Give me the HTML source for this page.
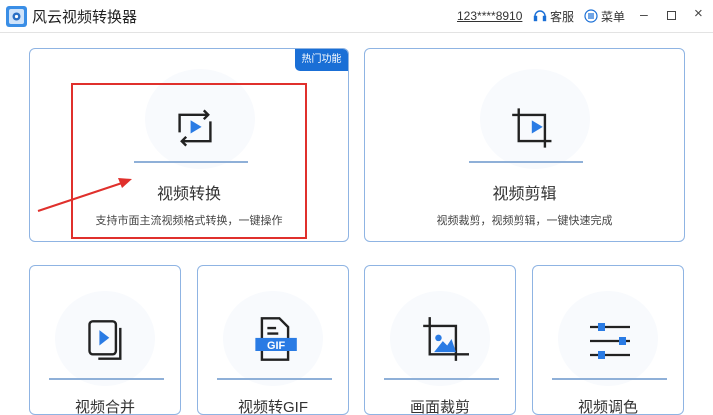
<!DOCTYPE html>
<html><head><meta charset="utf-8"><style>
*{margin:0;padding:0;box-sizing:border-box}
body{width:713px;height:400px;overflow:hidden;background:#fff;font-family:"Liberation Sans","Noto Sans CJK SC",sans-serif;position:relative;color:#333}
.a{position:absolute}
.card{position:absolute;border:1.5px solid #8fb4e3;border-radius:6px;background:#fff;overflow:hidden}
.blob{position:absolute;border-radius:50%;background:#f8fafd}
.ln{position:absolute;height:1.5px;background:#8fb0d8}
.t{position:absolute;width:100%;text-align:center}
</style></head><body>
<div class="a" style="left:0;top:32px;width:713px;height:1px;background:#e3e3e3"></div>
<svg class="a" style="left:6px;top:6px" width="21" height="21" viewBox="0 0 21 21"><rect width="21" height="21" rx="3" fill="#3a8ee6"/><rect x="3" y="3" width="15" height="15" rx="2" fill="#cfe3fa"/><circle cx="10.5" cy="10.5" r="4" fill="#2a6fc4"/><circle cx="10.5" cy="10.5" r="1.6" fill="#fff"/></svg>
<div class="a" style="left:32px;top:6px;font-size:15px;color:#222">风云视频转换器</div>
<div class="a" style="left:457px;top:9px;font-size:12px;color:#333;text-decoration:underline">123****8910</div>
<svg class="a" style="left:533px;top:9px" width="14" height="14" viewBox="0 0 14 14" fill="none" stroke="#1a6fd6" stroke-width="1.4"><path d="M2 9V7a5 5 0 0 1 10 0v2"/><rect x="1.5" y="7.5" width="2" height="4" fill="#1a6fd6"/><rect x="10.5" y="7.5" width="2" height="4" fill="#1a6fd6"/></svg>
<div class="a" style="left:550px;top:8px;font-size:12px">客服</div>
<svg class="a" style="left:584px;top:9px" width="14" height="14" viewBox="0 0 14 14" fill="none" stroke="#1a6fd6" stroke-width="1.2"><circle cx="7" cy="7" r="6"/><path d="M4 5h6M4 7h6M4 9h6"/></svg>
<div class="a" style="left:601px;top:8px;font-size:12px">菜单</div>
<div class="a" style="left:640px;top:6px;font-size:14px;color:#444">–</div>
<div class="a" style="left:667px;top:11px;width:9px;height:9px;border:1.3px solid #444"></div>
<div class="a" style="left:694px;top:5px;font-size:15px;color:#444">×</div>

<div class="card" style="left:29px;top:48px;width:320px;height:194px">
<div class="blob" style="left:115px;top:20px;width:110px;height:100px"></div>
<div class="a" style="right:0;top:0;width:53px;height:22px;background:#1a6fd6;border-bottom-left-radius:5px;color:#fff;font-size:10px;line-height:22px;text-align:center">热门功能</div>
<svg class="a" style="left:145px;top:57px" width="40" height="44" viewBox="0 0 36 40" fill="none" stroke="#222" stroke-width="2.2"><path d="M4 24V8h26"/><path d="M26 4l4 4-4 4" fill="none"/><path d="M32 14v18H6"/><path d="M10 28l-4 4 4 4"/><path d="M14 13l10 6-10 6z" fill="#2a7be4" stroke="none"/></svg>
<div class="ln" style="left:104px;top:112px;width:114px"></div>
<div class="t" style="top:131px;font-size:16px">视频转换</div>
<div class="t" style="top:163px;font-size:11px;color:#444">支持市面主流视频格式转换，一键操作</div>
</div>
<div class="card" style="left:364px;top:48px;width:321px;height:194px">
<div class="blob" style="left:115px;top:20px;width:110px;height:100px"></div>
<svg class="a" style="left:145px;top:55px" width="48" height="48" viewBox="0 0 44 44" fill="none" stroke="#222" stroke-width="2.2"><path d="M8 4v30h30"/><path d="M2 10h30v30"/><path d="M20 15l10 6-10 6z" fill="#2a7be4" stroke="none"/></svg>
<div class="ln" style="left:104px;top:112px;width:114px"></div>
<div class="t" style="top:131px;font-size:16px">视频剪辑</div>
<div class="t" style="top:163px;font-size:11px;color:#444">视频裁剪，视频剪辑，一键快速完成</div>
</div>

<div class="card" style="left:29px;top:265px;width:152px;height:150px">
<div class="blob" style="left:25px;top:25px;width:100px;height:95px"></div>
<svg class="a" style="left:56px;top:52px" width="40" height="44" viewBox="0 0 36 40" fill="none" stroke="#222" stroke-width="2.2"><rect x="3" y="3" width="24" height="30" rx="3"/><path d="M31 9v28H11"/><path d="M12 11l9 7-9 7z" fill="#2a7be4" stroke="none"/></svg>
<div class="ln" style="left:19px;top:112px;width:115px"></div>
<div class="t" style="top:130px;font-size:15px">视频合并</div>
</div>
<div class="card" style="left:197px;top:265px;width:152px;height:150px">
<div class="blob" style="left:25px;top:25px;width:100px;height:95px"></div>
<svg class="a" style="left:55px;top:49px" width="44" height="48" viewBox="0 0 40 44" fill="none" stroke="#222" stroke-width="2.2"><path d="M8 3h16l8 8v30H8z"/><path d="M13 12h8M13 17h10"/><rect x="2" y="21" width="38" height="12" fill="#2a7be4" stroke="none"/><text x="21" y="31" font-size="10" font-weight="bold" fill="#fff" stroke="none" text-anchor="middle" font-family="Liberation Sans">GIF</text></svg>
<div class="ln" style="left:19px;top:112px;width:115px"></div>
<div class="t" style="top:130px;font-size:15px">视频转GIF</div>
</div>
<div class="card" style="left:364px;top:265px;width:152px;height:150px">
<div class="blob" style="left:25px;top:25px;width:100px;height:95px"></div>
<svg class="a" style="left:56px;top:49px" width="48" height="48" viewBox="0 0 44 44" fill="none" stroke="#222" stroke-width="2.2"><path d="M8 2v34h36"/><path d="M2 10h30v32"/><circle cx="16" cy="21" r="3" fill="#2a7be4" stroke="none"/><path d="M12 34l8-10 4 4 4-6 4 12z" fill="#2a7be4" stroke="none"/></svg>
<div class="ln" style="left:19px;top:112px;width:115px"></div>
<div class="t" style="top:130px;font-size:15px">画面裁剪</div>
</div>
<div class="card" style="left:532px;top:265px;width:152px;height:150px">
<div class="blob" style="left:25px;top:25px;width:100px;height:95px"></div>
<svg class="a" style="left:55px;top:55px" width="44" height="40" viewBox="0 0 44 40" fill="none" stroke="#222" stroke-width="2.2"><path d="M2 6h40M2 20h40M2 34h40"/><rect x="10" y="2" width="7" height="8" fill="#2a7be4" stroke="none"/><rect x="31" y="16" width="7" height="8" fill="#2a7be4" stroke="none"/><rect x="10" y="30" width="7" height="8" fill="#2a7be4" stroke="none"/></svg>
<div class="ln" style="left:19px;top:112px;width:115px"></div>
<div class="t" style="top:130px;font-size:15px">视频调色</div>
</div>

<div class="a" style="left:71px;top:83px;width:236px;height:156px;border:2px solid #e0302c"></div>
<svg class="a" style="left:0;top:0" width="713" height="400"><line x1="38" y1="211" x2="122" y2="183" stroke="#e0302c" stroke-width="2"/><path d="M132 179l-14-1 4 10z" fill="#e0302c"/></svg>
</body></html>
